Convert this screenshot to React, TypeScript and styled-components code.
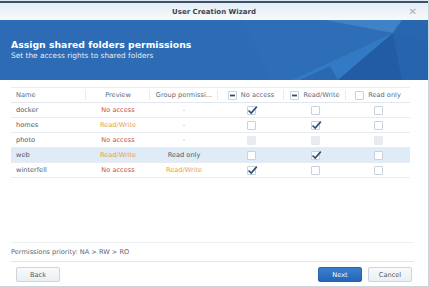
import { createGlobalStyle } from "styled-components";
import styled from "styled-components";

const GlobalStyle = createGlobalStyle`
  html, body {
    margin: 0;
    padding: 0;
    background: #cfd5db;
  }
  body {
    font-family: "DejaVu Sans", Verdana, sans-serif;
    width: 430px;
    height: 288px;
    overflow: hidden;
  }
`;

const Window = styled.div`
  width: 428px;
  height: 286px;
  background: #ffffff;
  display: flex;
  flex-direction: column;
  border-top: 1px solid #dfe8f1;
  box-sizing: border-box;
`;

const TitleBar = styled.div`
  height: 17px;
  border-top: 2px solid #3b526c;
  background: linear-gradient(#e6edf5, #f8fafc);
  display: flex;
  align-items: center;
  justify-content: center;
  position: relative;
  font-size: 7px;
  font-weight: bold;
  color: #3a4654;
`;

const CloseBtn = styled.span`
  position: absolute;
  right: 11px;
  top: 3px;
  font-size: 10px;
  font-weight: normal;
  color: #a3adb8;
`;

const Banner = styled.div`
  height: 60px;
  background: #2d6cb5;
  position: relative;
  overflow: hidden;
  display: flex;
  flex-direction: column;
  justify-content: center;
  padding: 0 11px 0;
`;

const BannerArt = styled.svg`
  position: absolute;
  left: 0;
  top: 0;
`;

const Heading = styled.div`
  position: relative;
  color: #ffffff;
  font-weight: bold;
  font-size: 9.3px;
  line-height: 12px;
`;

const SubHeading = styled.div`
  position: relative;
  color: #e2ecf8;
  font-size: 7.4px;
  line-height: 10px;
`;

const Body = styled.div`
  flex: 1;
  padding: 7px 18px 0 11px;
`;

const Grid = styled.div`
  display: grid;
  grid-template-columns: 75px 64px 68px 66px 62px 64px;
  border-top: 1px solid #e9eef3;
`;

const HeadCell = styled.div<{ $align?: string; $last?: boolean }>`
  height: 14px;
  border-bottom: 1px solid #e3e8ee;
  display: flex;
  align-items: center;
  justify-content: ${(p) => p.$align || "center"};
  padding: 0 5px;
  gap: 4px;
  font-size: 6.6px;
  color: #5b6a7a;
  white-space: nowrap;
  overflow: hidden;
  position: relative;
  &::after {
    content: "";
    position: absolute;
    right: 0;
    top: 2px;
    bottom: 2px;
    width: 1px;
    background: ${(p) => (p.$last ? "transparent" : "#e6ebf0")};
  }
`;

const Cell = styled.div<{ $align?: string; $sel?: boolean; $color?: string }>`
  height: 14px;
  border-bottom: 1px solid #e8ecf0;
  display: flex;
  align-items: center;
  justify-content: ${(p) => p.$align || "center"};
  padding: 0 5px;
  font-size: 6.6px;
  color: ${(p) => p.$color || "#4d5b69"};
  background: ${(p) => (p.$sel ? "#e0ebf8" : "transparent")};
  white-space: nowrap;
`;

const Box = styled.span<{ $disabled?: boolean }>`
  width: 9px;
  height: 9px;
  box-sizing: border-box;
  border: 1px solid ${(p) => (p.$disabled ? "#e6eaef" : "#c9d1da")};
  background: ${(p) => (p.$disabled ? "#e8ecf0" : "#ffffff")};
  border-radius: 1px;
  position: relative;
  display: inline-block;
  flex: none;
`;

const Footer = styled.div`
  padding: 0 14px 0 11px;
`;

const Note = styled.div`
  border-top: 1px solid #eef1f4;
  border-bottom: 1px solid #e3e7eb;
  height: 18px;
  display: flex;
  align-items: center;
  font-size: 6.6px;
  color: #5a6672;
`;

const ButtonRow = styled.div`
  display: flex;
  align-items: center;
  gap: 6px;
  padding: 5px 2px 4px 5px;
`;

const Button = styled.button<{ $primary?: boolean }>`
  width: 44px;
  height: 15px;
  padding: 0;
  font-family: inherit;
  font-size: 6.6px;
  border-radius: 2px;
  border: 1px solid ${(p) => (p.$primary ? "#2a63aa" : "#cdd5de")};
  background: ${(p) =>
    p.$primary ? "linear-gradient(#3a7fcf, #2466b6)" : "linear-gradient(#f8fafc, #eaeff4)"};
  color: ${(p) => (p.$primary ? "#ffffff" : "#4f5b67")};
`;

const Spacer = styled.div`
  flex: 1;
`;

function Check({ on, disabled }: { on?: boolean; disabled?: boolean }) {
  return (
    <Box $disabled={disabled}>
      {on && (
        <svg width="11" height="10" viewBox="0 0 11 10" style={{ position: "absolute", left: -1, top: -2 }}>
          <path d="M1.5 5.5 L4.2 8 L9.8 1.6" stroke="#2c4d7e" strokeWidth="1.6" fill="none" />
        </svg>
      )}
    </Box>
  );
}

function Minus() {
  return (
    <Box>
      <svg width="9" height="9" viewBox="0 0 9 9" style={{ position: "absolute", left: -1, top: -1 }}>
        <rect x="2" y="3.6" width="5" height="1.8" fill="#2c4d7e" />
      </svg>
    </Box>
  );
}

const RED = "#c8503f";
const ORANGE = "#e5a23f";

type Row = {
  name: string;
  preview: string;
  group: string;
  perm: "na" | "rw" | "none";
  disabled?: boolean;
  sel?: boolean;
};

const rows: Row[] = [
  { name: "docker", preview: "No access", group: "-", perm: "na" },
  { name: "homes", preview: "Read/Write", group: "-", perm: "rw" },
  { name: "photo", preview: "No access", group: "-", perm: "none", disabled: true },
  { name: "web", preview: "Read/Write", group: "Read only", perm: "rw", sel: true },
  { name: "winterfell", preview: "No access", group: "Read/Write", perm: "na" },
];

const colorFor = (v: string) => (v === "No access" ? RED : v === "Read/Write" ? ORANGE : "#4d5b69");

export default function App() {
  return (
    <>
      <GlobalStyle />
      <Window>
        <TitleBar>
          User Creation Wizard
          <CloseBtn>✕</CloseBtn>
        </TitleBar>
        <Banner>
          <BannerArt width="428" height="60" viewBox="0 0 428 60">
            <polygon points="243,0 393,0 393,13 292,60 272,60" fill="#2e6eb7" />
            <polygon points="325,0 402,0 393,13" fill="#3f82c8" />
            <polygon points="393,13 402,0 428,0 428,22" fill="#2866b0" />
            <polygon points="393,13 292,60 338,60" fill="#337ac4" />
            <polygon points="300,60 330,46 338,60" fill="#2a68b1" />
            <polygon points="393,13 338,60 402,60" fill="#225ca5" />
            <polygon points="393,13 428,22 428,60 402,60" fill="#2664ad" />
          </BannerArt>
          <Heading>Assign shared folders permissions</Heading>
          <SubHeading>Set the access rights to shared folders</SubHeading>
        </Banner>
        <Body>
          <Grid>
            <HeadCell $align="flex-start">Name</HeadCell>
            <HeadCell>Preview</HeadCell>
            <HeadCell>Group permissi...</HeadCell>
            <HeadCell><Minus />No access</HeadCell>
            <HeadCell><Minus />Read/Write</HeadCell>
            <HeadCell $last><Box />Read only</HeadCell>
            {rows.map((r) => [
              <Cell key={r.name + "n"} $align="flex-start" $sel={r.sel}>{r.name}</Cell>,
              <Cell key={r.name + "p"} $sel={r.sel} $color={colorFor(r.preview)}>{r.preview}</Cell>,
              <Cell key={r.name + "g"} $sel={r.sel} $color={r.group === "-" ? "#9aa4ae" : colorFor(r.group)}>{r.group}</Cell>,
              <Cell key={r.name + "a"} $sel={r.sel}><Check on={r.perm === "na"} disabled={r.disabled} /></Cell>,
              <Cell key={r.name + "w"} $sel={r.sel}><Check on={r.perm === "rw"} disabled={r.disabled} /></Cell>,
              <Cell key={r.name + "o"} $sel={r.sel}><Check disabled={r.disabled} /></Cell>,
            ])}
          </Grid>
        </Body>
        <Footer>
          <Note>Permissions priority: NA &gt; RW &gt; RO</Note>
          <ButtonRow>
            <Button>Back</Button>
            <Spacer />
            <Button $primary>Next</Button>
            <Button>Cancel</Button>
          </ButtonRow>
        </Footer>
      </Window>
    </>
  );
}
